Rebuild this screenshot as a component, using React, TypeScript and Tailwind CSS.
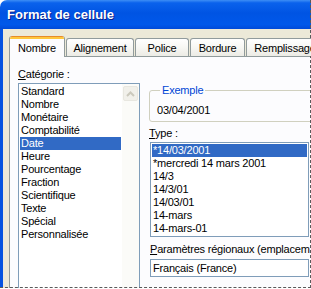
import React from 'react';

const categories = [
  'Standard',
  'Nombre',
  'Monétaire',
  'Comptabilité',
  'Date',
  'Heure',
  'Pourcentage',
  'Fraction',
  'Scientifique',
  'Texte',
  'Spécial',
  'Personnalisée',
];

const types = [
  '*14/03/2001',
  '*mercredi 14 mars 2001',
  '14/3',
  '14/3/01',
  '14/03/01',
  '14-mars',
  '14-mars-01',
];

const tabs = [
  { label: 'Alignement', w: 'w-[68px]' },
  { label: 'Police', w: 'w-[54px]' },
  { label: 'Bordure', w: 'w-[55px]' },
  { label: 'Remplissage', w: 'w-[78px]' },
];

export default function App() {
  return (
    <div className="relative w-[311px] h-[289px] overflow-hidden bg-white font-['Liberation_Sans',Arial,sans-serif] text-[11px] leading-[13px] tracking-[-0.2px] text-black">
      <div className="flex flex-col w-[311px] h-[288px]">
        {/* Title bar */}
        <div className="h-[29px] shrink-0 flex items-center pl-[7px] pb-[1px] rounded-tl-[7px] bg-[linear-gradient(180deg,#3D8EF5_0%,#0A62EC_10%,#0054E3_45%,#0058EA_85%,#004AD8_100%)]">
          <span className="text-white font-bold text-[13px] tracking-normal [text-shadow:1px_1px_0_#0A1E8C]">
            Format de cellule
          </span>
        </div>

        {/* Dialog body */}
        <div className="flex-1 min-h-0 flex flex-col border-l-[3px] border-[#0553E0] bg-[#ECE9D8] pl-[6px] pt-[7px]">
          {/* Tabs */}
          <div className="flex items-end h-[20px] shrink-0 relative z-10">
            <div className="h-[21px] w-[56px] shrink-0 -mb-px flex flex-col border-x border-[#919B9C] rounded-t-[3px] overflow-hidden bg-[#FCFCFE]">
              <div className="h-px bg-[#E68B2C]" />
              <div className="h-[2px] bg-[#FFC73C]" />
              <div className="flex-1 flex items-center justify-center pt-[1px]">Nombre</div>
            </div>
            {tabs.map(({ label, w }) => (
              <div
                key={label}
                className={`${w} shrink-0 h-[18px] ml-[1px] flex items-center justify-center pt-[2px] border-t border-x border-[#919B9C] rounded-t-[3px] bg-[linear-gradient(180deg,#FFFFFF_0%,#F7F7F3_50%,#ECEBE5_100%)] whitespace-nowrap`}
              >
                {label}
              </div>
            ))}
          </div>

          {/* Panel */}
          <div className="flex-1 min-h-0 flex gap-[9px] border-t border-l border-[#919B9C] bg-[#FCFCFE] pl-[8px] pt-[11px]">
            {/* Catégorie */}
            <div className="w-[122px] shrink-0 flex flex-col">
              <div>
                <span className="underline">C</span>atégorie :
              </div>
              <div className="flex-1 mt-[2px] flex border-t border-x border-[#7F9DB9] bg-white">
                <div className="flex-1 px-[1px] pt-[1px]">
                  {categories.map((c) => (
                    <div
                      key={c}
                      className={`h-[13px] pl-[1px] whitespace-nowrap ${c === 'Date' ? 'bg-[#316AC5] text-white' : ''}`}
                    >
                      {c}
                    </div>
                  ))}
                </div>
                <div className="w-[17px] bg-[#FBFBF8] pt-[2px] pl-[1px]">
                  <div className="w-[15px] h-[15px] rounded-[2px] bg-[#F1F0EA] border border-[#E8E7E0] flex items-center justify-center">
                    <svg width="9" height="6" viewBox="0 0 9 6">
                      <path d="M1 5 L4.5 1.5 L8 5" fill="none" stroke="#CBC9BC" strokeWidth="2" />
                    </svg>
                  </div>
                </div>
              </div>
            </div>

            {/* Right column */}
            <div className="flex-1 flex flex-col min-w-0">
              <fieldset className="mt-[16px] w-[175px] border border-[#D0D0BF] rounded-[3px] pl-[7px] pt-[7px] pb-[4px]">
                <legend className="ml-[3px] px-[2px] text-[#0046D5]">Exemple</legend>
                <div>03/04/2001</div>
              </fieldset>

              <div className="mt-[5px]">
                <span className="underline">T</span>ype :
              </div>
              <div className="mt-[2px] ml-[1px] w-[159px] border border-[#7F9DB9] bg-white p-[1px]">
                {types.map((t, i) => (
                  <div
                    key={t}
                    className={`h-[13px] pl-[1px] whitespace-nowrap ${i === 0 ? 'bg-[#316AC5] text-white' : ''}`}
                  >
                    {t}
                  </div>
                ))}
              </div>

              <div className="mt-[6px] ml-[1px] whitespace-nowrap">
                <span className="underline">P</span>aramètres régionaux (emplacem
              </div>
              <div className="mt-[3px] ml-[1px] w-[159px] h-[18px] border border-[#7F9DB9] bg-white flex items-center pl-[2px]">
                Français (France)
              </div>
            </div>
          </div>
        </div>
      </div>

      {/* crop edge */}
      <div className="absolute left-0 top-0 w-[311px] h-[288px] border-r border-b border-dashed border-[#5A5A5A] pointer-events-none" />
    </div>
  );
}
